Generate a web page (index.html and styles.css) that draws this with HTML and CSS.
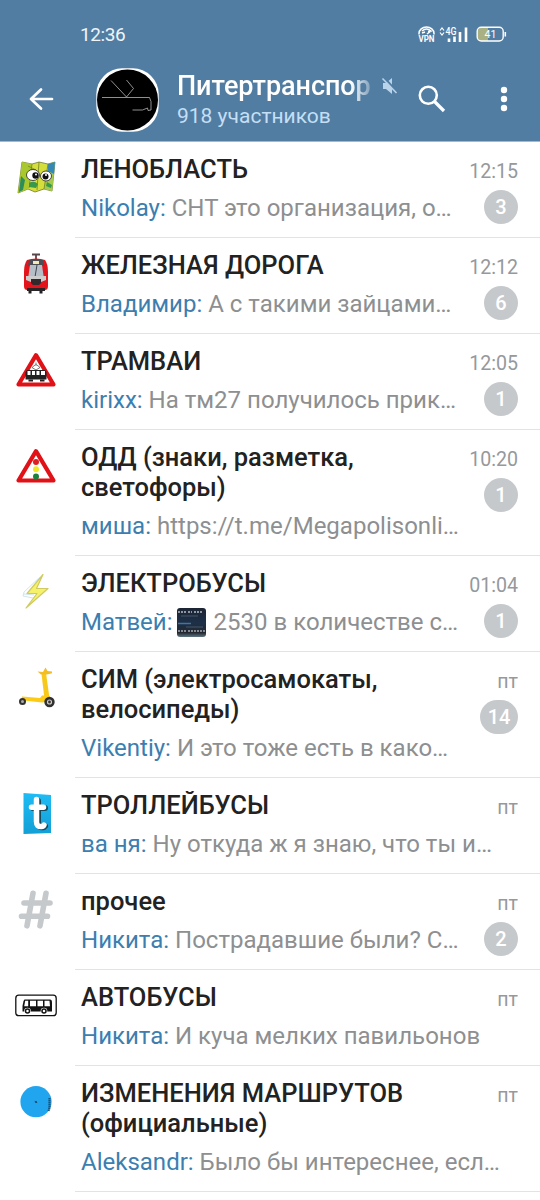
FILE: index.html
```html
<!DOCTYPE html>
<html lang="ru">
<head>
<meta charset="utf-8">
<title>Питертранспорт</title>
<link rel="stylesheet" href="styles.css">
</head>
<body>
<header class="header">
  <div class="status">
    <span class="clock">12:36</span>
    <svg class="vpn" width="18" height="20" viewBox="0 0 18 20"><path d="M1 8.500V7.500a7.500 6.500 0 0 1 15 0v1" fill="none" stroke="#fff" stroke-width="1.500"/><path d="M4 5q4.500-4 9 0l-3 .5M4 7l3-1M9 8l4-3" fill="none" stroke="#fff" stroke-width="1.500"/><text x="0.500" y="16" class="vpn-text" textLength="16" lengthAdjust="spacingAndGlyphs">VPN</text></svg>
    <svg class="signal" width="30" height="17" viewBox="0 0 30 17"><path d="M1 4.500L3 2l2 2.500M1 6.500L3 9l2-2.500" fill="none" stroke="#fff" stroke-width="1.200"/><text x="6.500" y="8.500" class="net-text" textLength="11" lengthAdjust="spacingAndGlyphs">4G</text><path d="M10 16v-3.500M15.500 16v-5.500M21 16V6M27 16V1.500" stroke="#fff" stroke-width="2.600"/></svg>
    <svg class="battery" width="32" height="17" viewBox="0 0 32 17"><path d="M5 2h7v13H5q-3 0-3-3V5q0-3 3-3z" fill="#a9b183"/><rect x="1.200" y="1.200" width="26" height="13.800" rx="4" fill="none" stroke="#fff" stroke-width="1.400"/><path d="M29.300 6v4.500" stroke="#fff" stroke-width="1.600"/><text x="8.500" y="12" class="bat-text">41</text></svg>
  </div>
  <div class="toolbar">
    <svg class="back" width="28" height="28" viewBox="0 0 28 28"><path d="M25 14H4M14 4.500L4 14l10 9.500" fill="none" stroke="#fff" stroke-width="2.700" stroke-linecap="round" stroke-linejoin="round"/></svg>
    <svg class="avatar" width="63" height="64" viewBox="0 0 63 64"><rect x="0.300" y="0.300" width="62.400" height="63.400" rx="26" fill="#fff"/><circle cx="31.500" cy="32" r="30.500" fill="#000"/><path d="M6 29.500h47.500l1.500 4v8.500l-3 .5-.5-2.500-5 2h-10M15 12.500L30.500 29l7-8.500-7-8.500" fill="none" stroke="#b5b5b5" stroke-width="0.800"/></svg>
    <div class="heading">
      <div class="name-row"><span class="name">Питертранспор</span>
      <svg class="mute" width="18" height="18" viewBox="0 0 18 18"><path d="M2 6h3l6-5v16l-6-5H2z" fill="#b9d4ea"/><path d="M2.500 0l14 15" stroke="#527da3" stroke-width="2"/><path d="M1.500 1.500l14 14.500" stroke="#b9d4ea" stroke-width="1.600"/></svg></div>
      <div class="members">918 участников</div>
    </div>
    <svg class="search" width="28" height="28" viewBox="0 0 28 28"><circle cx="10.300" cy="10.300" r="8.500" fill="none" stroke="#fff" stroke-width="2.600"/><path d="M16.500 16.500l9.500 9.500" stroke="#fff" stroke-width="3.200"/></svg>
    <svg class="more" width="8" height="26" viewBox="0 0 8 26"><g fill="#fff"><circle cx="4" cy="4" r="3.200"/><circle cx="4" cy="13" r="3.200"/><circle cx="4" cy="22" r="3.200"/></g></svg>
  </div>
</header>
<main class="topics">
  <article class="topic">
    <svg class="icon" width="48" height="48" viewBox="0 0 48 48"><path d="M10 8l10 2 7-2 9 2 7-2-3 29-8-2-9 3-7-3-10 4z" fill="#d5df3c" stroke="#5b6a25" stroke-width=".7"/><path d="M20 10l-4 25-10 4 4-31z" fill="#a9c82d"/><path d="M36 10l7-2-3 29-8-2z" fill="#a5cb4c"/><path d="M36 10l7-2-1 12-6-3z" fill="#3689b7"/><path d="M9 22l4 4-2 10-4 2z" fill="#2e8c58"/><path d="M17 29q5-3 9 1l-2 4-7-1zM35 28l5 3-1 3-5-2z" fill="#37994b"/><path d="M20 10l-3 24M27 8l-2 28M36 10l-4 25M16 12l8 4" stroke="#738024" fill="none" stroke-width=".8"/><ellipse cx="21" cy="21" rx="6.500" ry="5.500" fill="#fff" stroke="#222" stroke-width=".8"/><ellipse cx="34" cy="22" rx="5.500" ry="5" fill="#fff" stroke="#222" stroke-width=".8"/><circle cx="23.500" cy="21.500" r="3.200" fill="#111"/><circle cx="33.500" cy="22.500" r="3" fill="#111"/><circle cx="24" cy="20.500" r="1" fill="#fff"/><circle cx="34" cy="21" r="1" fill="#fff"/></svg>
    <div class="text"><h2 class="title">ЛЕНОБЛАСТЬ</h2><p class="msg"><b>Nikolay:</b> СНТ это организация, о…</p></div>
    <div class="meta"><time>12:15</time><span class="badge">3</span></div>
  </article>
  <article class="topic">
    <svg class="icon" width="48" height="48" viewBox="0 0 48 48"><path d="M20 4.500h8M24 5v5" stroke="#57464a" stroke-width="1.800"/><path d="M15 10q9-3 18 0 3 4 3 12v14q0 4-3 4H15q-3 0-3-4V22q0-8 3-12z" fill="#e3141c"/><path d="M17 10q7-2 14 0l1 6H16z" fill="#4c4e55"/><path d="M18 15h12l2 14H16z" fill="#b5bdc7"/><path d="M25 15l-2 12" stroke="#3e454e"/><rect x="21" y="11" width="6" height="3" fill="#f4e9b5"/><path d="M14 26h20v4l-5 2H19l-5-2z" fill="#ccc"/><path d="M19 29h10v4l-2 2h-6l-2-2z" fill="#33282b"/><path d="M15 38h18v3H15z" fill="#292426"/><path d="M18 41v2.500M29 41v2.500" stroke="#222" stroke-width="3"/></svg>
    <div class="text"><h2 class="title">ЖЕЛЕЗНАЯ ДОРОГА</h2><p class="msg"><b>Владимир:</b> А с такими зайцами…</p></div>
    <div class="meta"><time>12:12</time><span class="badge">6</span></div>
  </article>
  <article class="topic">
    <svg class="icon" width="48" height="48" viewBox="0 0 48 48"><path d="M24 9.200L41.500 38.500h-35z" fill="#fff" stroke="#e01218" stroke-width="4.200" stroke-linejoin="round"/><path d="M20 21.500l4 2.500 4-2.500-3-2.500h-2zM24 16.500V19" fill="none" stroke="#555" stroke-width=".8"/><path d="M15 24h18l1.500 2v7.500h-21V26z" fill="#222"/><path d="M15.500 25h3v4h-3zM20 25h3v4h-3zM24.500 25h3v4h-3zM29 25h4v4h-4z" fill="#fff"/><path d="M16.500 34.500h4.500M28 34.500h4.500" stroke="#222" stroke-width="1.800"/></svg>
    <div class="text"><h2 class="title">ТРАМВАИ</h2><p class="msg"><b>kirixx:</b> На тм27 получилось прик…</p></div>
    <div class="meta"><time>12:05</time><span class="badge">1</span></div>
  </article>
  <article class="topic">
    <svg class="icon" width="48" height="48" viewBox="0 0 48 48"><path d="M24 9.200L41.500 38.500h-35z" fill="#fff" stroke="#e01218" stroke-width="4.200" stroke-linejoin="round"/><circle cx="24" cy="20" r="3" fill="#dc2023"/><circle cx="24" cy="27.300" r="3" fill="#f1e723"/><circle cx="24" cy="34.500" r="3" fill="#18823b"/></svg>
    <div class="text"><h2 class="title">ОДД (знаки, разметка,<br>светофоры)</h2><p class="msg"><b>миша:</b> https://t.me/Megapolisonli…</p></div>
    <div class="meta"><time>10:20</time><span class="badge">1</span></div>
  </article>
  <article class="topic">
    <svg class="icon" width="48" height="48" viewBox="0 0 48 48"><path d="M31 6.500L15 25.500h10L14 40l22-19.500H24.500z" fill="#f6f16a" stroke="#cfca62" stroke-width="1.200" stroke-linejoin="round"/><path d="M28 9L12 24l-1 4 10 2M12 26l10 1" fill="none" stroke="#c4dde5" stroke-width=".8"/></svg>
    <div class="text"><h2 class="title">ЭЛЕКТРОБУСЫ</h2><p class="msg"><b>Матвей:</b><svg class="thumb" width="29" height="29" viewBox="0 0 29 29"><defs><linearGradient id="tg" x2="0" y2="1"><stop offset="0" stop-color="#1c2533"/><stop offset=".5" stop-color="#1d3048"/><stop offset=".85" stop-color="#23272f"/><stop offset="1" stop-color="#5f7684"/></linearGradient></defs><rect width="29" height="29" rx="3" fill="url(#tg)"/><path d="M1 4h8M11 4h4M17 4h8" stroke="#b5bac2" stroke-width="1.500" stroke-dasharray="2 1"/><path d="M4 8h17M9 19h17" stroke="#46566b"/><path d="M1 15.500h13" stroke="#477398" stroke-width="1.500"/><path d="M1 23h8M11 23h17" stroke="#a5aab1" stroke-width="1.500" stroke-dasharray="2 1"/></svg> <span>2530 в количестве с…</span></p></div>
    <div class="meta"><time>01:04</time><span class="badge">1</span></div>
  </article>
  <article class="topic">
    <svg class="icon" width="48" height="48" viewBox="0 0 48 48"><path d="M34 9l3.500 25-5 1-3-25z" fill="#f8c91d"/><path d="M25.500 7.500l5.500.5 2.500-4.500L35.500 7l4.500.5v1.800l-5 1.200h-6z" fill="#f3bd25"/><path d="M10 32.500l18 1.500 2-2.500h6q4 2 3 5.500l-9 1.500-18-2q-3-1-2-4z" fill="#fbcb18"/><circle cx="10.500" cy="37.500" r="2.500" fill="#aaa" stroke="#34332d" stroke-width="2"/><circle cx="37.500" cy="38" r="3.900" fill="#ccc" stroke="#303030" stroke-width="2.600"/><circle cx="37.500" cy="38" r="1.400" fill="#39342a"/></svg>
    <div class="text"><h2 class="title">СИМ (электросамокаты,<br>велосипеды)</h2><p class="msg"><b>Vikentiy:</b> И это тоже есть в како…</p></div>
    <div class="meta"><time>пт</time><span class="badge wide">14</span></div>
  </article>
  <article class="topic">
    <svg class="icon" width="48" height="48" viewBox="0 0 48 48"><defs><linearGradient id="tb" x2="0" y2="1"><stop stop-color="#1fbcf5"/><stop offset="1" stop-color="#139fd6"/></linearGradient></defs><path d="M11.500 3L39 5v38l-27.500 1z" fill="url(#tb)"/><path d="M26 11v22q0 5 6 4l1-1M21 18h12" fill="none" stroke="#17495c" stroke-width="6" stroke-linecap="round"/><path d="M24.500 9.500v22q0 5.500 5 5 2 0 2.500-1.500M19.500 17.300h12" fill="none" stroke="#fff" stroke-width="5.500" stroke-linecap="round"/></svg>
    <div class="text"><h2 class="title">ТРОЛЛЕЙБУСЫ</h2><p class="msg"><b>ва ня:</b> Ну откуда ж я знаю, что ты и…</p></div>
    <div class="meta"><time>пт</time></div>
  </article>
  <article class="topic">
    <svg class="icon" width="48" height="48" viewBox="0 0 48 48"><path d="M21 7.300l-6 32.500M34 7.300l-6 32.500M12 17h26M9.500 30.200h26" stroke="#c5c9cc" stroke-width="5.600" stroke-linecap="round"/></svg>
    <div class="text"><h2 class="title">прочее</h2><p class="msg"><b>Никита:</b> Пострадавшие были? С…</p></div>
    <div class="meta"><time>пт</time><span class="badge">2</span></div>
  </article>
  <article class="topic">
    <svg class="icon" width="48" height="48" viewBox="0 0 48 48"><rect x="3.800" y="13.200" width="40.400" height="20.500" rx="3" fill="#fff" stroke="#111" stroke-width="1.300"/><path d="M12.500 17.500H38q2 0 2 3v9H10.500V24l1-5z" fill="#111"/><path d="M13.200 18.800h3v5.400h-4zM18 18.800h6v5.400h-6zM25.500 18.800H31v5.400h-5.500zM32.500 18.800h5l.5 5.400h-5.500z" fill="#fff"/><circle cx="15.500" cy="29" r="3.300" fill="#fff"/><circle cx="32" cy="29" r="3.300" fill="#fff"/><circle cx="15.500" cy="29" r="2" fill="#fff" stroke="#111" stroke-width="1.500"/><circle cx="32" cy="29" r="2" fill="#fff" stroke="#111" stroke-width="1.500"/></svg>
    <div class="text"><h2 class="title">АВТОБУСЫ</h2><p class="msg"><b>Никита:</b> И куча мелких павильонов</p></div>
    <div class="meta"><time>пт</time></div>
  </article>
  <article class="topic">
    <svg class="icon" width="48" height="48" viewBox="0 0 48 48"><circle cx="24" cy="23.700" r="15.600" fill="#22a5ef"/><circle cx="24" cy="24" r="1.100" fill="#155075"/><path d="M22.700 23.200l2.500 1.500" stroke="#174867" stroke-width=".8"/><path d="M37.500 20v10l-1 3" stroke="#125580" stroke-width="2.200" fill="none" stroke-dasharray="1.500 .5"/></svg>
    <div class="text"><h2 class="title">ИЗМЕНЕНИЯ МАРШРУТОВ<br>(официальные)</h2><p class="msg"><b>Aleksandr:</b> Было бы интереснее, есл…</p></div>
    <div class="meta"><time>пт</time></div>
  </article>
</main>
</body>
</html>
```
FILE: styles.css
```css
* { box-sizing: border-box; }
body { margin: 0; width: 540px; height: 1200px; overflow: hidden; background: #fff; font-family: Roboto, sans-serif; }
h2, p { margin: 0; }
svg { display: block; flex: none; overflow: visible; }
.header { height: 142px; background: #527da3; border-bottom: 1px solid #a3b9cd; color: #fff; }
.status { height: 57px; display: flex; align-items: flex-start; padding: 26px 0 0 80px; }
.clock { font-size: 19px; line-height: 18px; width: 338px; color: #eef5fa; letter-spacing: -.4px; }
.signal { margin-left: 3px; }
.battery { margin-left: 7px; }
.status svg text { fill: #fff; font-family: Roboto, sans-serif; }
.vpn-text { font-size: 9px; font-weight: 700; }
.net-text { font-size: 10px; font-weight: 500; }
.status svg .bat-text { font-size: 10.5px; }
.toolbar { height: 84px; display: flex; align-items: center; padding-left: 27px; }
.avatar { margin-left: 41px; margin-top: 2px; }
.heading { width: 241px; margin-left: 18px; margin-top: 2px; }
.name-row { display: flex; align-items: center; height: 30px; }
.name { width: 197px; white-space: nowrap; font-size: 27px; font-weight: 500; line-height: 32px; letter-spacing: -.05px; -webkit-mask-image: linear-gradient(to right, #000 174px, transparent 201px); mask-image: linear-gradient(to right, #000 174px, transparent 201px); }
.mute { margin-left: 7px; }
.members { font-size: 21px; line-height: 31px; height: 28px; color: #c4dff5; }
.search { margin-top: 0; }
.more { margin-left: 54px; margin-top: 0; }
.topic { display: flex; position: relative; padding: 12px 22px 12px 12px; }
.topic::after { content: ""; position: absolute; left: 75px; right: 0; bottom: 0; height: 1px; background: #e2e3e4; }
.icon { margin-bottom: -1px; }
.text { margin-left: 21px; flex: 1; min-width: 0; }
.title { font-size: 25.5px; line-height: 30px; font-weight: 500; color: #222; white-space: nowrap; }
.msg { margin-top: 9px; height: 33px; font-size: 24.03px; line-height: 31px; color: #8d8f91; white-space: nowrap; }
.msg b { font-weight: 400; color: #3c7eb0; }
.thumb { display: inline-block; vertical-align: -7px; margin-left: 4px; margin-right: 2px; margin-top: -3px; }
.meta { width: 50px; margin-top: 2px; display: flex; flex-direction: column; align-items: flex-end; }
.meta time { font-size: 19.6px; line-height: 32px; color: #95999c; }
.badge { min-width: 34px; height: 34px; margin-top: 2px; border-radius: 17px; background: #c6c9cc; color: #fff; font-size: 20px; font-weight: 500; line-height: 34px; text-align: center; }
.badge.wide { min-width: 38px; }
```
